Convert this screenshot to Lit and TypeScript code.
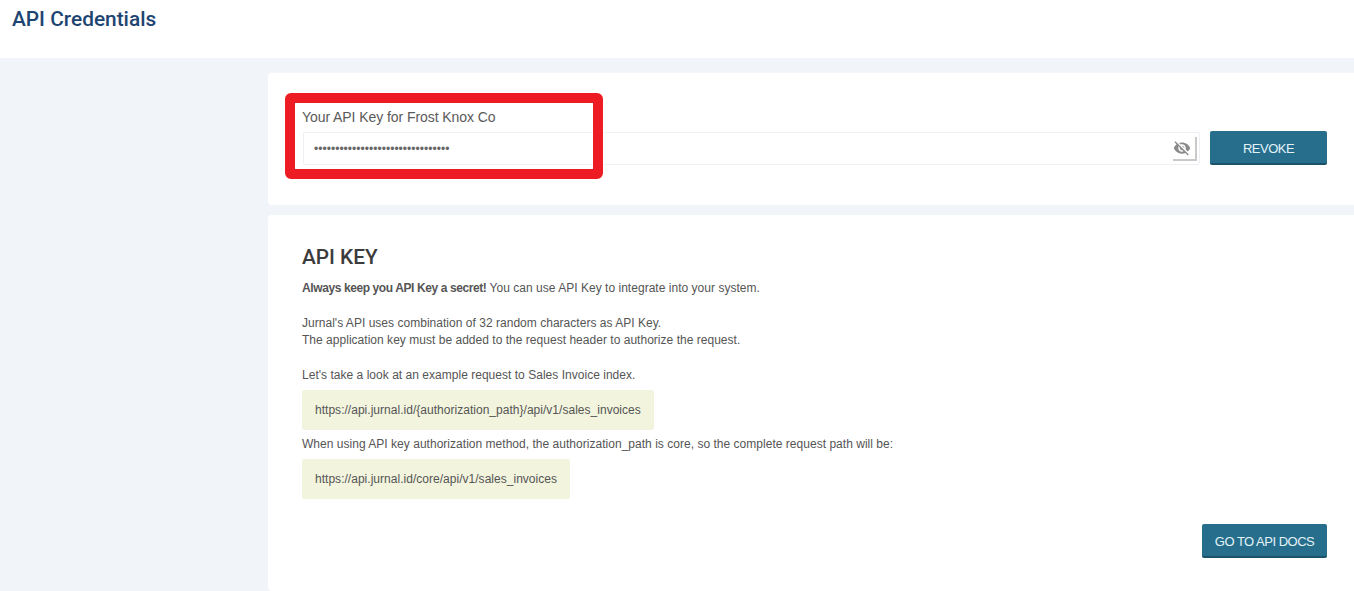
import { LitElement, html, css } from 'lit';
import { customElement } from 'lit/decorators.js';

const API_KEY = 'x'.repeat(32);

@customElement('app-root')
export class AppRoot extends LitElement {
  static styles = css`
    :host {
      display: block;
      height: 591px;
      overflow: hidden;
      background: #f1f4f8;
      font-family: 'Liberation Sans', Arial, sans-serif;
      font-size: 12px;
      letter-spacing: 0.025px;
      color: #555;
    }
    .topbar {
      height: 58px;
      box-sizing: border-box;
      padding: 7px 12px 0;
      background: #fff;
    }
    .topbar h1 {
      margin: 0;
      font-family: Roboto, sans-serif;
      font-size: 20.85px;
      line-height: 24px;
      font-weight: 500;
      letter-spacing: 0;
      color: #1e4571;
    }
    .content {
      display: flex;
      flex-direction: column;
      gap: 10px;
      margin-left: 268px;
      padding-top: 15px;
    }
    .card {
      background: #fff;
      border-radius: 4px 0 0 4px;
    }
    .key-card {
      position: relative;
      height: 132px;
      box-sizing: border-box;
      padding: 36px 27px 0 34px;
    }
    .key-card label {
      display: block;
      font-size: 14px;
      line-height: 17px;
      letter-spacing: -0.07px;
      color: #5a5a5a;
      margin-bottom: 6px;
    }
    .key-row {
      display: flex;
      align-items: flex-start;
      gap: 10px;
      margin-left: 1px;
    }
    .key-field {
      flex: 1;
      height: 33px;
      box-sizing: border-box;
      display: flex;
      align-items: center;
      padding-left: 10px;
      border: 1px solid #edf0f4;
      border-radius: 2px;
      background: #fff;
    }
    .key-field input {
      flex: 1;
      min-width: 0;
      border: 0;
      outline: 0;
      padding: 0;
      font: 12px 'Liberation Sans', Arial, sans-serif;
      letter-spacing: 0.03px;
      color: #666;
      background: transparent;
    }
    .eye {
      width: 24px;
      height: 24px;
      margin-right: 2px;
      padding-right: 4px;
      display: flex;
      align-items: center;
      justify-content: center;
      box-sizing: border-box;
      border-right: 2px solid #c9c9c9;
      border-bottom: 2px solid #c9c9c9;
    }
    .eye svg {
      display: block;
    }
    .btn {
      height: 34px;
      box-sizing: border-box;
      border: 0;
      border-bottom: 2px solid #1b5169;
      border-radius: 2px;
      background: #266e8c;
      color: #e3f3f8;
      font: 13px 'Liberation Sans', Arial, sans-serif;
      letter-spacing: -0.5px;
      text-align: center;
      padding: 2px 0 0;
    }
    .revoke {
      width: 117px;
      margin-top: -1px;
    }
    .docs {
      width: 125px;
    }
    .highlight {
      position: absolute;
      left: 17px;
      top: 20px;
      width: 318px;
      height: 86px;
      box-sizing: border-box;
      border: 10px solid #ed1c24;
      border-radius: 6px;
      pointer-events: none;
    }
    .info-card {
      height: 376px;
      box-sizing: border-box;
      padding: 30px 27px 0 34px;
    }
    .info-card h2 {
      margin: 0 0 11px;
      font-family: Roboto, sans-serif;
      font-size: 20.8px;
      line-height: 24px;
      font-weight: 500;
      letter-spacing: 0;
      color: #3c3c3c;
    }
    .info-card p {
      margin: 0;
      line-height: 17px;
    }
    .info-card strong {
      font-weight: 700;
      letter-spacing: -0.4px;
    }
    .info-card p.spaced {
      margin-top: 18px;
    }
    .info-card p.tight {
      line-height: 16px;
    }
    .code {
      width: fit-content;
      box-sizing: border-box;
      height: 40px;
      display: flex;
      align-items: center;
      padding: 0 13px;
      background: #f2f4de;
      border-radius: 2px;
      margin-top: 6px;
      margin-bottom: 6px;
    }
    .tight + .code {
      margin-top: 7px;
    }
    .actions {
      display: flex;
      justify-content: flex-end;
      margin-top: 25px;
    }
  `;

  render() {
    return html`
      <header class="topbar"><h1>API Credentials</h1></header>
      <main class="content">
        <section class="card key-card">
          <label for="key">Your API Key for Frost Knox Co</label>
          <div class="key-row">
            <div class="key-field">
              <input id="key" type="password" .value=${API_KEY} readonly />
              <span class="eye">
                <svg width="18" height="18" viewBox="0 0 24 24" fill="#8a8a8a">
                  <path d="M12 7c2.76 0 5 2.24 5 5 0 .65-.13 1.26-.36 1.83l2.92 2.92c1.51-1.26 2.7-2.89 3.43-4.75-1.73-4.39-6-7.5-11-7.5-1.4 0-2.74.25-3.98.7l2.16 2.16C10.74 7.13 11.35 7 12 7zM2 4.27l2.28 2.28.46.46C3.08 8.3 1.78 10.02 1 12c1.73 4.39 6 7.5 11 7.5 1.55 0 3.03-.3 4.38-.84l.42.42L19.73 22 21 20.73 3.27 3 2 4.27zM7.53 9.8l1.55 1.55c-.05.21-.08.43-.08.65 0 1.66 1.34 3 3 3 .22 0 .44-.03.65-.08l1.55 1.55c-.67.33-1.41.53-2.2.53-2.76 0-5-2.24-5-5 0-.79.2-1.53.53-2.2zm4.31-.78l3.15 3.15.02-.16c0-1.66-1.34-3-3-3l-.17.01z" />
                </svg>
              </span>
            </div>
            <button class="btn revoke">REVOKE</button>
          </div>
          <div class="highlight"></div>
        </section>
        <section class="card info-card">
          <h2>API KEY</h2>
          <p><strong>Always keep you API Key a secret!</strong> You can use API Key to integrate into your system.</p>
          <p class="spaced">Jurnal's API uses combination of 32 random characters as API Key.<br />The application key must be added to the request header to authorize the request.</p>
          <p class="spaced">Let's take a look at an example request to Sales Invoice index.</p>
          <div class="code">https://api.jurnal.id/{authorization_path}/api/v1/sales_invoices</div>
          <p class="tight">When using API key authorization method, the authorization_path is core, so the complete request path will be:</p>
          <div class="code">https://api.jurnal.id/core/api/v1/sales_invoices</div>
          <div class="actions"><button class="btn docs">GO TO API DOCS</button></div>
        </section>
      </main>
    `;
  }
}
